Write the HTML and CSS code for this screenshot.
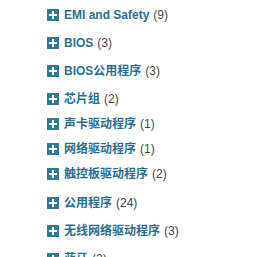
FILE: index.html
```html
<!DOCTYPE html>
<html>
  <head>
    <title>驱动程序分类</title>
    <meta charset="utf-8">
    <link rel="stylesheet" href="styles.css">
  </head>
  <body>
    <!-- 分类列表 -->
    <ul class="cats">
      <li><span class="plus"></span><a href="#">EMI and Safety</a> <span class="num">(9)</span></li>
      <li><span class="plus"></span><a href="#">BIOS</a> <span class="num">(3)</span></li>
      <li><span class="plus"></span><a href="#">BIOS公用程序</a> <span class="num">(3)</span></li>
      <li class="tight"><span class="plus"></span><a href="#">芯片组</a> <span class="num">(2)</span></li>
      <li class="tight"><span class="plus"></span><a href="#">声卡驱动程序</a> <span class="num">(1)</span></li>
      <li class="tight"><span class="plus"></span><a href="#">网络驱动程序</a> <span class="num">(1)</span></li>
      <li class="wide"><span class="plus"></span><a href="#">触控板驱动程序</a> <span class="num">(2)</span></li>
      <li><span class="plus"></span><a href="#">公用程序</a> <span class="num">(24)</span></li>
      <li><span class="plus"></span><a href="#">无线网络驱动程序</a> <span class="num">(3)</span></li>
      <li><span class="plus"></span><a href="#">蓝牙</a> <span class="num">(2)</span></li>
    </ul>
  </body>
</html>
```

FILE: styles.css
```css
* {font-family: "Liberation Sans", Arial, "Noto Sans CJK SC", sans-serif;}
body {margin: 0; background: #fff; font-size: 12px;}
.cats {list-style: none; margin: 0; padding: 7px 0 0 47px;}
.cats li {display: flex; align-items: center; height: 16px; line-height: 16px; margin-bottom: 12px; white-space: nowrap;}
.cats li.tight {margin-bottom: 9px;}
.cats li.wide {margin-bottom: 13px;}
.cats a {color: #2b6f8e; font-weight: bold; text-decoration: none;}
.num {color: #444; margin-left: 4px;}
.plus {position: relative; width: 12px; height: 12px; background: #2f7b96; margin-right: 5px; flex: none;}
.plus::before {content: ""; position: absolute; left: 2px; top: 5px; width: 8px; height: 2px; background: #fff;}
.plus::after {content: ""; position: absolute; left: 5px; top: 2px; width: 2px; height: 8px; background: #fff;}
```
